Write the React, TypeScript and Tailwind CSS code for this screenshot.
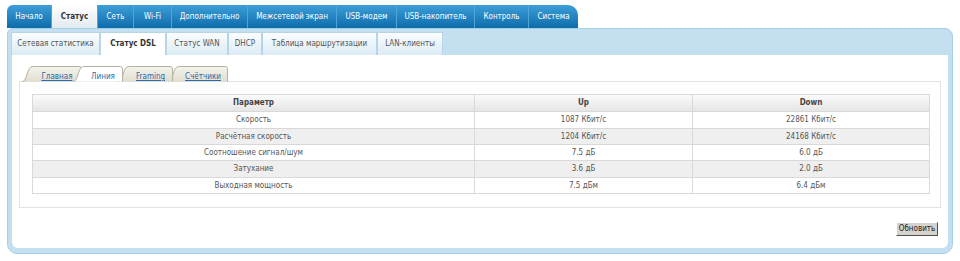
import React from 'react'

const navItems = [
  { label: 'Начало', w: 'w-[45px]' },
  { label: 'Статус', w: 'w-[46px]', active: true },
  { label: 'Сеть', w: 'w-[36px]' },
  { label: 'Wi-Fi', w: 'w-[38px]' },
  { label: 'Дополнительно', w: 'w-[76px]' },
  { label: 'Межсетевой экран', w: 'w-[89px]' },
  { label: 'USB-модем', w: 'w-[60px]' },
  { label: 'USB-накопитель', w: 'w-[78px]' },
  { label: 'Контроль', w: 'w-[54px]' },
  { label: 'Система', w: 'w-[49px]' },
]

const subTabs = [
  { label: 'Сетевая статистика', w: 'w-[89px]' },
  { label: 'Статус DSL', w: 'w-[66px]', active: true },
  { label: 'Статус WAN', w: 'w-[62px]' },
  { label: 'DHCP', w: 'w-[34px]' },
  { label: 'Таблица маршрутизации', w: 'w-[115px]' },
  { label: 'LAN-клиенты', w: 'w-[66px]' },
]

const innerTabs = [
  { id: 'main', label: 'Главная', width: 60, cls: 'w-[60px] z-[4]' },
  { id: 'line', label: 'Линия', width: 50, cls: 'w-[50px] -ml-[9px] z-[10]', active: true },
  { id: 'framing', label: 'Framing', width: 55, cls: 'w-[55px] -ml-[5px] z-[3]' },
  { id: 'counters', label: 'Счётчики', width: 60, cls: 'w-[60px] -ml-[5px] z-[2]' },
]

const rows = [
  { name: 'Скорость', up: '1087 Кбит/с', down: '22861 Кбит/с', h: 'h-[17px]', bg: 'bg-white' },
  { name: 'Расчётная скорость', up: '1204 Кбит/с', down: '24168 Кбит/с', h: 'h-[16px]', bg: 'bg-[#efefef]' },
  { name: 'Соотношение сигнал/шум', up: '7.5 дБ', down: '6.0 дБ', h: 'h-[16px]', bg: 'bg-white' },
  { name: 'Затухание', up: '3.6 дБ', down: '2.0 дБ', h: 'h-[17px]', bg: 'bg-[#efefef]' },
  { name: 'Выходная мощность', up: '7.5 дБм', down: '6.4 дБм', h: 'h-[16px]', bg: 'bg-white' },
]

function InnerTab({ label, width, cls, active, id }: { label: string; width: number; cls: string; active?: boolean; id: string }) {
  const d = `M0.5 15.5 C5 15.5 5 0.5 10.5 0.5 H${width - 3} Q${width - 0.5} 0.5 ${width - 0.5} 3 V15.5`
  return (
    <div className={`relative h-[15px] shrink-0 ${cls}`}>
      <svg className="absolute left-0 top-0" width={width} height={16} viewBox={`0 0 ${width} 16`}>
        <defs>
          <linearGradient id={`g-${id}`} x1="0" y1="0" x2="0" y2="1">
            <stop offset="0" stopColor={active ? '#ffffff' : '#f6f4ee'} />
            <stop offset="1" stopColor={active ? '#ffffff' : '#e1ddd0'} />
          </linearGradient>
        </defs>
        <path d={d} fill={`url(#g-${id})`} stroke="#b4b1a3" strokeWidth="1" />
      </svg>
      <span
        className={`relative block pl-[10px] pt-[6px] text-center text-[8px] leading-[9px] text-[#2c6aa8] ${active ? '' : 'underline'}`}
      >
        {label}
      </span>
    </div>
  )
}

export default function App() {
  return (
    <div className="h-[261px] w-[960px] overflow-hidden bg-white pl-[7px] pt-[5px] font-['Tahoma','DejaVu_Sans_Condensed','Liberation_Sans',sans-serif] text-[8px]">
      {/* top menu */}
      <div className="flex h-[23px] w-[571px] overflow-hidden rounded-tl-[6px] rounded-tr-[10px] bg-gradient-to-b from-[#3c9fd8] to-[#0a6cab]">
        {navItems.map((item) => (
          <div
            key={item.label}
            className={`${item.w} shrink-0 border-r border-[#4ea6d8] text-center leading-[23px] last:border-r-0 ${
              item.active ? 'bg-gradient-to-b from-white to-[#e2eaf0] font-bold text-[#333]' : 'text-white'
            }`}
          >
            {item.label}
          </div>
        ))}
      </div>

      {/* panel */}
      <div className="w-[946px] rounded-tl-[6px] rounded-tr-[8px] rounded-b-[10px] border border-[#a7cfe6] bg-[#c3dff0] px-[4px] pb-[5px]">
        <div className="-ml-[1px] flex h-[26px] items-end">
          {subTabs.map((t) => (
            <div
              key={t.label}
              className={`${t.w} h-[23px] shrink-0 border border-b-0 border-[#b6d6e8] text-center leading-[21px] ${
                t.active ? 'bg-white font-bold text-[#333]' : 'bg-gradient-to-b from-[#fbfdfe] to-[#dcebf4] text-[#555]'
              }`}
            >
              {t.label}
            </div>
          ))}
        </div>

        <div className="h-[193px] rounded-b-[6px] bg-white px-[7px] pt-[11px]">
          <div className="ml-[3px] flex h-[15px]">
            {innerTabs.map((t) => (
              <InnerTab key={t.id} {...t} />
            ))}
          </div>

          <div className="h-[127px] border border-[#e2e2e2] px-[12px] pt-[12px]">
            <table className="w-[897px] table-fixed border-collapse text-center text-[#555]">
              <colgroup>
                <col className="w-[442px]" />
                <col className="w-[218px]" />
                <col className="w-[237px]" />
              </colgroup>
              <thead>
                <tr className="h-[17px] bg-gradient-to-b from-[#fbfbfb] to-[#e4e4e4] text-[#444]">
                  <th className="border border-[#d9d9d9] p-0 font-bold">Параметр</th>
                  <th className="border border-[#d9d9d9] p-0 font-bold">Up</th>
                  <th className="border border-[#d9d9d9] p-0 font-bold">Down</th>
                </tr>
              </thead>
              <tbody>
                {rows.map((r) => (
                  <tr key={r.name} className={`${r.h} ${r.bg}`}>
                    <td className="border border-[#d9d9d9] p-0">{r.name}</td>
                    <td className="border border-[#d9d9d9] p-0">{r.up}</td>
                    <td className="border border-[#d9d9d9] p-0">{r.down}</td>
                  </tr>
                ))}
              </tbody>
            </table>
          </div>

          <div className="mt-[14px] flex justify-end pr-[3px]">
            <button className="h-[14px] w-[42px] border border-b-[#505050] border-l-white border-r-[#505050] border-t-white bg-[#d6d3cc] p-0 text-[8px] leading-[12px] text-[#222]">
              Обновить
            </button>
          </div>
        </div>
      </div>
    </div>
  )
}
